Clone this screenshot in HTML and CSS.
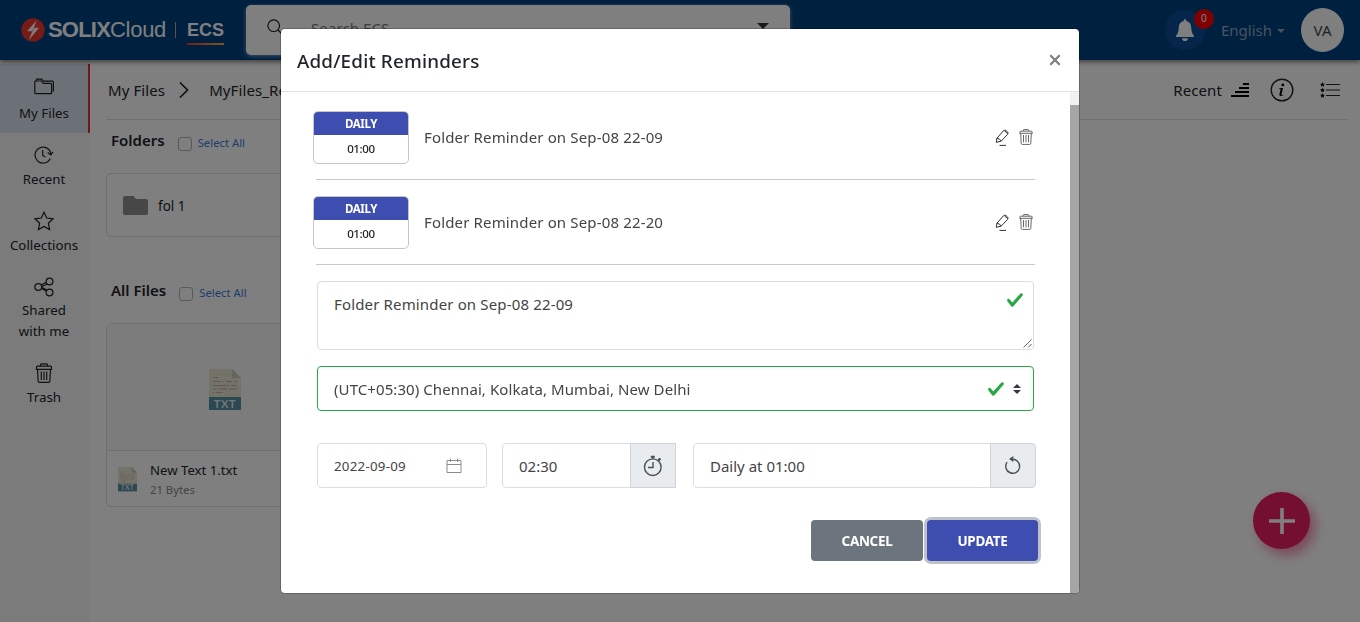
FILE: index.html
```html
<!DOCTYPE html>
<html lang="en">
<head>
<meta charset="utf-8">
<title>SOLIXCloud ECS</title>
<link rel="stylesheet" href="styles.css">
</head>
<body>
<svg class="defs" width="0" height="0" aria-hidden="true">
  <symbol id="trash" viewBox="0 0 20 20"><path d="M3.5 6.5 4.2 18.5Q4.3 19.4 5.2 19.4H14.8Q15.7 19.4 15.8 18.5L16.5 6.5M2.5 6.3V4.2Q2.5 3.2 3.5 3.2H16.5Q17.5 3.2 17.5 4.2V6.3ZM6.5 3V1.7Q6.5.8 7.4.8H12.6Q13.5.8 13.5 1.7V3M7.3 8.5V17M10 8.5V17M12.7 8.5V17"/></symbol>
  <symbol id="bin" viewBox="0 0 14 16"><path d="M1.7 4.5 2.2 14.3Q2.3 15.4 3.3 15.4H10.7Q11.7 15.4 11.8 14.3L12.3 4.5M.3 4.3H13.7M1 4V2.7Q1 2.2 1.6 2.2H12.4Q13 2.2 13 2.7V4M4.3 2V1.2Q4.3.6 5 .6H9Q9.7.6 9.7 1.2V2M4.5 6V13.3M7 6V13.3M9.5 6V13.3"/></symbol>
  <symbol id="pencil" viewBox="0 0 16 18"><path d="M2.3 13.4 2.9 9.3 9.4 1.8Q10.6 .7 11.9 1.5L13.4 2.8Q14.7 4 13.6 5.4L7.2 12.1ZM10.4 1.6 13.6 4.8M2.9 9.3Q5.7 9.3 7.2 12.1M5.5 16.4H12"/></symbol>
  <symbol id="check" viewBox="0 0 8 8"><path d="M2.3 6.73.6 4.53c-.4-1.04.46-1.4 1.1-.8l1.1 1.4 3.4-3.8c.6-.63 1.6-.27 1.2.7l-4 4.6c-.43.5-.8.4-1.1.1z"/></symbol>
</svg>

<header class="topbar">
  <div class="brand">
    <svg class="bolt" width="24" height="24" viewBox="0 0 24 24"><circle cx="12" cy="12" r="11.7" fill="#ed3731"/><path d="M15.5 2.5 6 13.2H11L8 22 18 9.8H13Z" fill="#fff"/><path d="M17.5 1.5 6.5 22.5" stroke="#ed3731" stroke-width=".5"/></svg>
    <span class="brand-solix">SOLIX</span><span class="brand-cloud">Cloud</span>
    <span class="brand-rule"></span>
    <span class="brand-ecs">ECS</span>
  </div>
  <div class="search">
    <svg width="17" height="17" viewBox="0 0 17 17" class="line"><circle cx="6.7" cy="6.7" r="5.8"/><path d="M11 11 16 16"/></svg>
    <span class="search-text">Search ECS</span>
    <span class="search-caret"></span>
  </div>
  <div class="account">
    <div class="bell">
      <svg width="20" height="24" viewBox="0 0 20 24" fill="#fff"><path d="M10 1Q11.3 1 11.3 3Q15.8 4 16.2 9Q16.3 15 19 18V19H1V18Q3.7 15 3.8 9Q4.2 4 8.7 3Q8.7 1 10 1ZM7 20.2H13Q13 23 10 23T7 20.2Z"/></svg>
      <span class="badge">0</span>
    </div>
    <div class="language">English<span class="caret"></span></div>
    <div class="avatar">VA</div>
  </div>
</header>

<div class="shell">
  <nav class="sidebar">
    <a class="nav-item active"><svg class="line" width="20" height="20" viewBox="0 0 20 20"><path d="M.8 4V15.7Q.8 16.7 1.8 16.7H16.6Q17.6 16.7 17.6 15.7V7.3Q17.6 6.3 16.6 6.3H9.3L7.5 4H.8M2.3 3.8V3Q2.3 2.2 3.2 2.2H7.7L9.7 4.2H18.4Q19.4 4.2 19.4 5.2V14.5"/></svg><span>My Files</span></a>
    <a class="nav-item"><svg class="line" width="20" height="20" viewBox="0 0 20 20"><path d="M17 9.3A8 8 0 1 0 16.3 13.5M8.7 5V10.5L11.5 12M13.7 7.5 16.8 10 19 7"/></svg><span>Recent</span></a>
    <a class="nav-item"><svg class="line" width="20" height="20" viewBox="0 0 20 20"><path d="M10 1.2 12.7 7 19 7.8 14.4 12.2 15.6 18.6 10 15.5 4.4 18.6 5.6 12.2 1 7.8 7.3 7Z"/></svg><span>Collections</span></a>
    <a class="nav-item shared"><svg class="line" width="20" height="20" viewBox="0 0 20 20"><circle cx="4.3" cy="10" r="3.4"/><circle cx="15.5" cy="4.5" r="3.4"/><circle cx="15.5" cy="15.5" r="3.4"/><path d="M7.2 8 12.2 5.2M7.7 9.8 13 7M7.5 11.2 12.2 14.2M7.6 10.2 13.2 13.3"/></svg><span>Shared<br>with me</span></a>
    <a class="nav-item"><svg class="line" width="20" height="20"><use href="#trash"/></svg><span>Trash</span></a>
  </nav>

  <main class="content">
    <div class="crumbs">
      <span class="crumb-home">My Files</span>
      <svg class="line chevron" width="12" height="18" viewBox="0 0 12 18"><path d="M2 1.5 9.5 9 2 16.5"/></svg>
      <span class="crumb-here">MyFiles_Reminders</span>
      <div class="tools">
        <span class="sort-label">Recent</span>
        <svg class="sort" width="19" height="14" viewBox="0 0 19 14"><path d="M12 0H18V2H12ZM8 4H18V6H8ZM4 8H18V10H4ZM0 12H18V14H0Z"/></svg>
        <svg class="info" width="24" height="24" viewBox="0 0 24 24"><circle cx="12" cy="12" r="10.8" fill="none" stroke="#222" stroke-width="1.4"/><path d="M9.3 10H13L11.5 16.5Q11.4 17.5 13.7 16.4L13.5 17.1Q12 18 10.5 18Q9 18 9.4 16.3L10.7 10.7H9.2Z"/><circle cx="12.8" cy="6.9" r="1.4"/></svg>
        <svg class="list" width="20" height="16" viewBox="0 0 20 16"><path d="M2.5.1 3.2 1.7 5 1.8 3.7 3 4.1 4.7 2.5 3.8.9 4.7 1.3 3 0 1.8 1.8 1.7ZM2.5 5.6 3.2 7.2 5 7.3 3.7 8.5 4.1 10.2 2.5 9.3.9 10.2 1.3 8.5 0 7.3 1.8 7.2ZM2.5 11.1 3.2 12.7 5 12.8 3.7 14 4.1 15.7 2.5 14.8.9 15.7 1.3 14 0 12.8 1.8 12.7Z"/><path d="M6 2.5H20M6 8H20M6 13.5H20" stroke="#222" stroke-width="1.2"/></svg>
      </div>
    </div>
    <div class="section-head"><h2>Folders</h2><span class="box"></span><a>Select All</a></div>
    <div class="folder-card">
      <svg width="26" height="20" viewBox="0 0 26 20"><path fill="#8f8f8f" d="M0 2Q0 0 2 0H10.5L13 3H23Q25 3 25 5V17Q25 19 23 19H2Q0 19 0 17Z"/></svg>
      <span>fol 1</span>
    </div>
    <div class="section-head files-head"><h2>All Files</h2><span class="box"></span><a>Select All</a></div>
    <div class="file-card">
      <div class="file-preview">
        <svg width="32" height="42" viewBox="0 0 32 42"><path fill="#e8e6d5" d="M0 0H23L32 9V28H0Z"/><path fill="#c9c8b8" d="M23 0V9H32Z"/><path stroke="#c4aaa4" fill="none" d="M4 8.5H9M4 12.5H12M14 12.5H15M17 12.5H23M25 12.5H28M4 16.5H20M22 16.5H28M4 20H8M10 20H18M20 20H28M4 23.5H5M7 23.5H14"/><path fill="#5890a5" d="M0 28H32V41H0Z"/><text class="txt-label" x="16" y="38.7">TXT</text></svg>
      </div>
      <div class="file-meta">
        <svg width="19" height="25" viewBox="0 0 32 42"><path fill="#e8e6d5" d="M0 0H23L32 9V28H0Z"/><path fill="#c9c8b8" d="M23 0V9H32Z"/><path stroke="#c4aaa4" fill="none" d="M4 8.5H9M4 12.5H12M14 12.5H15M17 12.5H23M25 12.5H28M4 16.5H20M22 16.5H28M4 20H8M10 20H18M20 20H28M4 23.5H5M7 23.5H14"/><path fill="#5890a5" d="M0 28H32V41H0Z"/><text class="txt-label" x="16" y="38.7">TXT</text></svg>
        <div><div class="file-name">New Text 1.txt</div><div class="file-size">21 Bytes</div></div>
      </div>
    </div>
  </main>
</div>
<button class="fab"><svg width="26" height="26" viewBox="0 0 26 26"><path d="M13 0V26M0 13H26" stroke="#fff" stroke-width="3.6"/></svg></button>

<div class="backdrop">
  <section class="modal">
    <div class="modal-head"><h1>Add/Edit Reminders</h1><svg width="12" height="12" viewBox="0 0 12 12"><path d="M1.3 1.3 10.7 10.7M10.7 1.3 1.3 10.7" stroke="#7f7f7f" stroke-width="2.3"/></svg></div>
    <div class="modal-body">
      <div class="form">
        <div class="reminder">
          <div class="tag"><b>DAILY</b><span>01:00</span></div>
          <span class="text">Folder Reminder on Sep-08 22-09</span>
          <svg class="pencil" width="16" height="18"><use href="#pencil"/></svg>
          <svg class="bin" width="14" height="16"><use href="#bin"/></svg>
        </div>
        <div class="reminder">
          <div class="tag"><b>DAILY</b><span>01:00</span></div>
          <span class="text">Folder Reminder on Sep-08 22-20</span>
          <svg class="pencil" width="16" height="18"><use href="#pencil"/></svg>
          <svg class="bin" width="14" height="16"><use href="#bin"/></svg>
        </div>
        <div class="field note"><span class="text">Folder Reminder on Sep-08 22-09</span><svg class="check" width="18" height="18"><use href="#check"/></svg>
          <svg class="grip" width="9" height="9" viewBox="0 0 9 9"><path d="M.5 8.5 8.5.5M5 8.5 8.5 5" stroke="#555" stroke-width=".9"/></svg></div>
        <div class="field zone"><span class="text zone-text">(UTC+05:30) Chennai, Kolkata, Mumbai, New Delhi</span><svg class="check" width="18" height="18"><use href="#check"/></svg>
          <svg width="8" height="10" viewBox="0 0 4 5"><path fill="#343a40" d="M2 0L0 2h4zm0 5L0 3h4z"/></svg></div>
        <div class="row">
          <div class="field date"><span class="date-text">2022-09-09</span><svg width="16" height="16" viewBox="0 0 16 16" fill="none" stroke="#8c8c8c"><path d="M1 2.5H15V14.5H1ZM1 6.5H15M4.5.5V4M11.5.5V4"/></svg></div>
          <div class="group time"><div class="field"><span class="time-text">02:30</span></div><div class="addon"><svg width="20" height="22" viewBox="0 0 20 22" fill="none" stroke="#495057" stroke-width="1.4"><circle cx="9.8" cy="12.2" r="8.3"/><path d="M10 7V12.5H5M9.8 2V4M15.3 3.7 17.3 5.3"/><path stroke-width="2" d="M7.8 1.7H11.8M15.3 5.5 17.5 3.5"/></svg></div></div>
          <div class="group repeat"><div class="field"><span class="repeat-text">Daily at 01:00</span></div><div class="addon"><svg width="18" height="20" viewBox="0 0 18 20"><path fill="none" stroke="#495057" stroke-width="1.4" d="M8 3.3A7 7 0 1 1 3 6.2"/><path fill="#495057" d="M5 3.1 9.3 0V6Z"/></svg></div></div>
        </div>
        <div class="actions"><button class="btn cancel">CANCEL</button><button class="btn update">UPDATE</button></div>
      </div>
      <div class="scroll"><div class="thumb"></div></div>
    </div>
  </section>
</div>
</body>
</html>
```
FILE: styles.css
```css
* { box-sizing: border-box; }
body {
  margin: 0;
  height: 622px;
  overflow: hidden;
  background: #fff;
  color: #212529;
  font-family: "Noto Sans", "Open Sans", sans-serif;
  font-size: 14px;
}
svg { display: block; flex: none; }
h1, h2 { margin: 0; font-weight: 500; }
button { border: 0; font-family: inherit; }
.defs { position: absolute; }
.line { fill: none; stroke: #222; stroke-width: 1.2; }

/* Top bar */
.topbar {
  position: relative;
  display: flex;
  height: 60px;
  padding: 0 16px 0 21px;
  background: #004080;
  box-shadow: 0 2px 5px rgba(0, 0, 0, .5);
}
.brand { display: flex; align-items: center; width: 225px; color: #fff; font-family: "Liberation Sans", sans-serif; font-size: 22px; }
.brand-solix { margin-left: 3px; font-weight: 700; letter-spacing: -.8px; }
.brand-cloud { letter-spacing: -.3px; }
.brand-rule { width: 1px; height: 16px; margin: 0 11px 0 9px; background: #aab; }
.brand-ecs { margin-top: 3px; border-bottom: 2px solid; border-image: linear-gradient(90deg, #ed3b30, #f4ad38) 1; font-size: 18px; font-weight: 700; line-height: 22px; padding-bottom: 2px; }
.search { display: flex; align-items: flex-start; width: 544px; height: 50px; margin-top: 5px; padding: 14px 21px 0; border-radius: 5px; background: #fff; box-shadow: 0 1px 4px rgba(255, 255, 255, .5); }
.search-text { flex: 1; margin: -1px 0 0 27px; font-size: 15px; line-height: 20px; color: #777; letter-spacing: .1px; }
.search-caret { border: 6px solid transparent; border-top-color: #333; margin-top: 4px; }
.account { display: flex; align-items: center; margin-left: auto; }
.bell { position: relative; display: flex; align-items: center; justify-content: center; width: 40px; height: 40px; border-radius: 50%; background: #0b4c94; }
.badge { position: absolute; left: 29px; top: -1px; width: 20px; height: 20px; border-radius: 50%; background: #f00; color: #fff; font-size: 10px; line-height: 18px; text-align: center; }
.language { display: flex; align-items: center; margin: 0 16px 1px; color: #8fa6c0; font-size: 15px; }
.caret { margin: 2px 0 0 5px; border: 4.5px solid transparent; border-top-color: currentColor; border-bottom: 0; }
.avatar { width: 43px; height: 44px; border-radius: 50%; background: #fff; font-size: 15px; line-height: 44px; text-align: center; color: #444; }

/* Side navigation */
.shell { display: flex; height: 562px; }
.sidebar { width: 90px; padding-top: 4px; background: #f6f6f6; }
.nav-item { display: flex; flex-direction: column; align-items: center; gap: 4px; padding: 12px 3px 9px 1px; font-size: 13.3px; line-height: 21px; text-align: center; }
.nav-item.active { padding: 13px 0 9px; gap: 6px; border-right: 2px solid #e5322d; background: #d9e2ef; }
.nav-item.shared { gap: 3px; }

/* File browser */
.content { flex: 1; padding: 0 11px 0 16px; }
.crumbs { display: flex; align-items: center; height: 60px; padding-left: 2px; border-bottom: 1px solid #e0e0e0; font-size: 15px; letter-spacing: .1px; }
.chevron { margin: 0 19px 0 13px; stroke-width: 1.7; }
.tools { display: flex; align-items: center; margin-left: auto; padding-right: 9px; }
.sort-label { margin-right: 9px; }
.info { margin: 0 26px 0 20px; }
.section-head { display: flex; align-items: center; height: 43px; padding: 0 0 2px 5px; }
.section-head h2 { font-size: 15px; font-weight: 600; margin-top: -1px; }
.section-head a { font-size: 11.3px; color: #3b7ddd; margin-top: 4px; }
.box { width: 14px; height: 14px; margin: 6px 6px 0 13px; border: 1px solid #b5b5b5; border-radius: 3px; }
.folder-card { display: flex; align-items: center; gap: 9px; width: 240px; height: 64px; margin-top: 10px; padding: 2px 0 0 16px; border: 1px solid #dcdcdc; border-radius: 5px; font-size: 13.5px; }
.files-head { margin-top: 33px; }
.file-card { width: 240px; height: 184px; margin-top: 10px; border: 1px solid #dcdcdc; border-radius: 5px; }
.file-preview { display: flex; align-items: center; justify-content: center; height: 127px; padding-top: 6px; padding-right: 3px; border-bottom: 1px solid #dcdcdc; background: #f8f8f8; }
.file-meta { display: flex; align-items: center; gap: 13px; height: 55px; padding: 1px 0 0 11px; }
.file-name { font-size: 13.2px; line-height: 20px; }
.file-size { font-size: 11.3px; line-height: 19px; color: #888; }
.txt-label { fill: #e8eef0; font: 700 11px Lato, sans-serif; letter-spacing: .6px; text-anchor: middle; }
.fab { position: absolute; left: 1253px; top: 492px; display: flex; align-items: center; justify-content: center; width: 57px; height: 57px; border-radius: 50%; background: #e91e63; box-shadow: 5px 6px 12px rgba(233, 30, 99, .5); }

/* Reminder dialog */
.backdrop { position: fixed; inset: 0; display: flex; justify-content: center; align-items: flex-start; padding-top: 29px; background: rgba(0, 0, 0, .5); }
.modal { display: flex; flex-direction: column; width: 798px; height: 564px; border-radius: 4px; background: #fff; overflow: hidden; box-shadow: 0 0 0 1px rgba(0, 0, 0, .2); }
.modal-head { display: flex; align-items: center; justify-content: space-between; height: 63px; padding: 0 18px 0 16px; border-bottom: 1px solid #dee2e6; }
.modal-head h1 { margin-top: 2px; font-size: 18.8px; letter-spacing: .2px; }
.modal-body { display: flex; flex: 1; }
.form { flex: 1; padding: 3px 35px 0; }
.scroll { width: 9px; padding-top: 13px; background: #f1f1f1; }
.thumb { height: 488px; background: #a6a6a6; }
.text, .repeat-text, .time-text { font-size: 15px; color: #444; }
.text { letter-spacing: .15px; }
.zone-text { letter-spacing: .08px; }
.reminder { display: flex; align-items: center; height: 85px; padding-right: 2px; border-bottom: 1px solid #c8c8c8; }
.tag { display: flex; flex-direction: column; width: 96px; height: 53px; margin: 1px 15px 0 -3px; border: 1px solid #c6c6c6; border-radius: 5px; overflow: hidden; font-size: 11.5px; line-height: 24px; text-align: center; letter-spacing: -.35px; }
.tag b { height: 24px; margin: -1px -1px 0; background: #3d4eb0; color: #fff; font-weight: 700; font-size: 11.5px; line-height: 25px; }
.tag span { line-height: 27px; font-weight: 500; }
.pencil { margin: 1px 9px 0 auto; fill: none; stroke: #333; stroke-width: 1; }
.bin { fill: none; stroke: #666; stroke-width: 1; }
.field { display: flex; align-items: center; border: 1px solid #dcdce8; border-radius: 4px; background: #fff; }
.check { fill: #28a745; }
.note { position: relative; align-items: flex-start; justify-content: space-between; height: 69px; margin: 16px 1px 0; padding: 12px 9px 0 16px; }
.note .check { margin-top: -3px; }
.grip { position: absolute; right: 1px; bottom: 1px; }
.zone { height: 45px; margin: 16px 1px 0; padding: 0 12px 0 16px; border-color: #28a745; }
.zone .check { margin: 0 8px 0 auto; }
.row { display: flex; height: 45px; margin: 32px -1px 0 1px; }
.date { justify-content: space-between; width: 170px; padding: 0 24px 0 16px; }
.date-text { margin-top: 1px; font-size: 13.3px; letter-spacing: .25px; color: #444; }
.group { display: flex; }
.group .field { flex: 1; padding-left: 16px; border-radius: 4px 0 0 4px; }
.addon { display: flex; align-items: center; justify-content: center; width: 46px; margin-left: -1px; border: 1px solid #ced4da; background: #e9ecef; }
.time { width: 174px; margin: 0 17px 0 15px; }
.repeat { width: 343px; }
.repeat .addon { border-radius: 0 4px 4px 0; }
.actions { display: flex; justify-content: flex-end; gap: 4px; margin: 32px -3px 0 0; }
.btn { height: 41px; border-radius: 4px; color: #fff; font-size: 13.5px; font-weight: 700; letter-spacing: -.3px; }
.cancel { width: 112px; background: #6c757d; }
.update { width: 111px; background: #3d4eb0; box-shadow: 0 0 0 3px #bfc3c9; }
```
